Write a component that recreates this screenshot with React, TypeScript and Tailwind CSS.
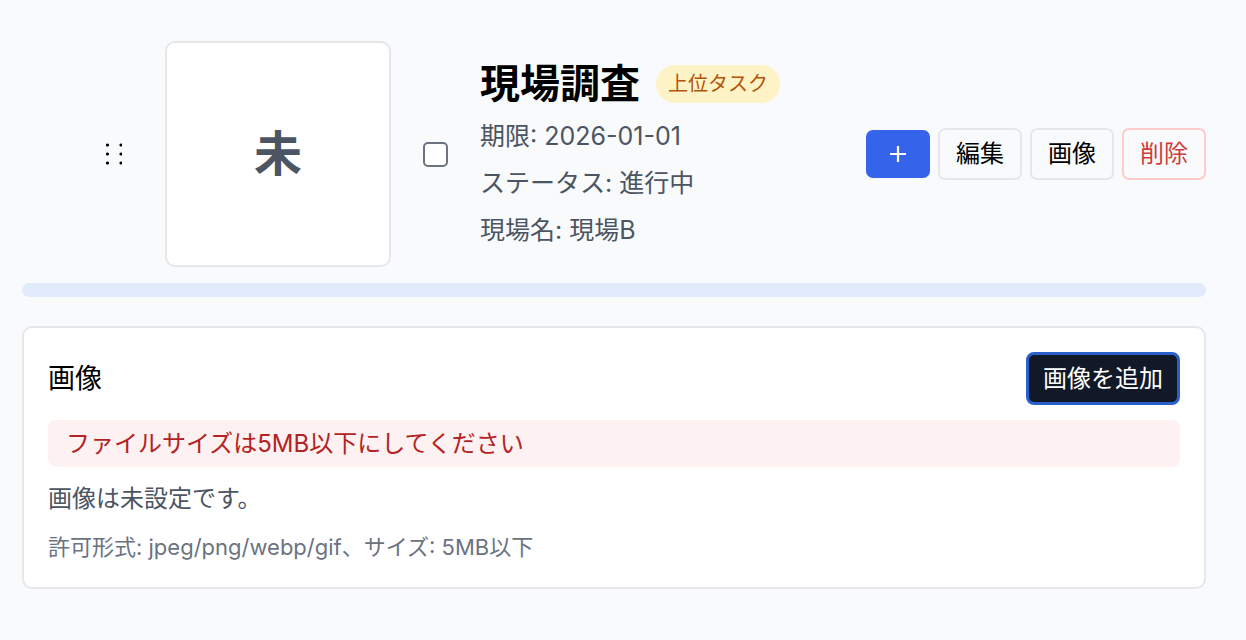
export default function App() {
  return (
    <div className="min-h-screen bg-[#f9fafb] pl-[22px] pr-[40px] pt-[41px] font-[Inter,'Noto_Sans_CJK_JP',sans-serif]">
      {/* task row */}
      <div className="flex items-center pl-[84px]">
        <svg width="16" height="22" viewBox="0 0 16 22" className="shrink-0">
          <circle cx="1.5" cy="2" r="1.6" fill="#000" />
          <circle cx="15" cy="2" r="1.6" fill="#000" />
          <circle cx="1.5" cy="11" r="1.6" fill="#000" />
          <circle cx="15" cy="11" r="1.6" fill="#000" />
          <circle cx="1.5" cy="20" r="1.6" fill="#000" />
          <circle cx="15" cy="20" r="1.6" fill="#000" />
        </svg>

        <div className="ml-[43px] flex h-[226px] w-[226px] shrink-0 items-center justify-center rounded-[10px] border-2 border-[#e5e7eb] bg-white">
          <span className="text-[48px] leading-none font-bold text-[#4b5563]">未</span>
        </div>

        <div className="ml-[32px] h-[25px] w-[25px] shrink-0 rounded-[5px] border-2 border-[#6b7280] bg-white" />

        <div className="ml-[32px] mt-[6px] flex-1">
          <div className="flex items-center gap-4">
            <h1 className="text-[40px] leading-[48px] font-bold text-black">現場調査</h1>
            <span className="flex h-[38px] items-center rounded-full bg-[#fef3c7] px-3 text-[20px] text-[#b45309]">
              上位タスク
            </span>
          </div>
          <p className="mt-[5px] text-[25px] leading-[47px] text-[#4b5563]">期限: 2026-01-01</p>
          <p className="text-[25px] leading-[47px] text-[#4b5563]">ステータス: 進行中</p>
          <p className="text-[25px] leading-[47px] text-[#4b5563]">現場名: 現場B</p>
        </div>

        <div className="flex items-center gap-2">
          <button className="flex h-[48px] w-[64px] items-center justify-center rounded-[7px] bg-[#3563e9]">
            <svg width="18" height="18" viewBox="0 0 18 18">
              <path d="M9 1v16M1 9h16" stroke="#fff" strokeWidth="2.2" />
            </svg>
          </button>
          <button className="h-[52px] rounded-[7px] border-2 border-[#e5e7eb] bg-[#f9fafb] px-[16px] text-[24px] text-black">
            編集
          </button>
          <button className="h-[52px] rounded-[7px] border-2 border-[#e5e7eb] bg-[#f9fafb] px-[16px] text-[24px] text-black">
            画像
          </button>
          <button className="h-[52px] rounded-[7px] border-2 border-[#fecaca] bg-[#f9fafb] px-[16px] text-[24px] text-[#d03a3a]">
            削除
          </button>
        </div>
      </div>

      {/* progress */}
      <div className="mt-[16px] h-[14px] rounded-full bg-[#e1ebfb]" />

      {/* image card */}
      <div className="mt-[29px] rounded-[10px] border-2 border-[#e5e7eb] bg-white p-[24px]">
        <div className="flex h-[53px] items-center justify-between">
          <h2 className="text-[27px] leading-none text-black">画像</h2>
          <button className="flex h-[53px] items-center rounded-[8px] border-[3px] border-[#2b5fcc] bg-[#111827] px-[14px] text-[24px] text-white">
            画像を追加
          </button>
        </div>
        <div className="mt-[15px] flex h-[47px] items-center rounded-[8px] bg-[#fdf1f1] px-[18px] text-[24px] text-[#b42222]">
          ファイルサイズは5MB以下にしてください
        </div>
        <p className="mt-[14px] text-[24px] leading-[36px] text-[#4b5563]">画像は未設定です。</p>
        <p className="mt-[15px] text-[22px] leading-[31px] text-[#6b7280]">
          許可形式: jpeg/png/webp/gif、サイズ: 5MB以下
        </p>
      </div>
    </div>
  );
}
